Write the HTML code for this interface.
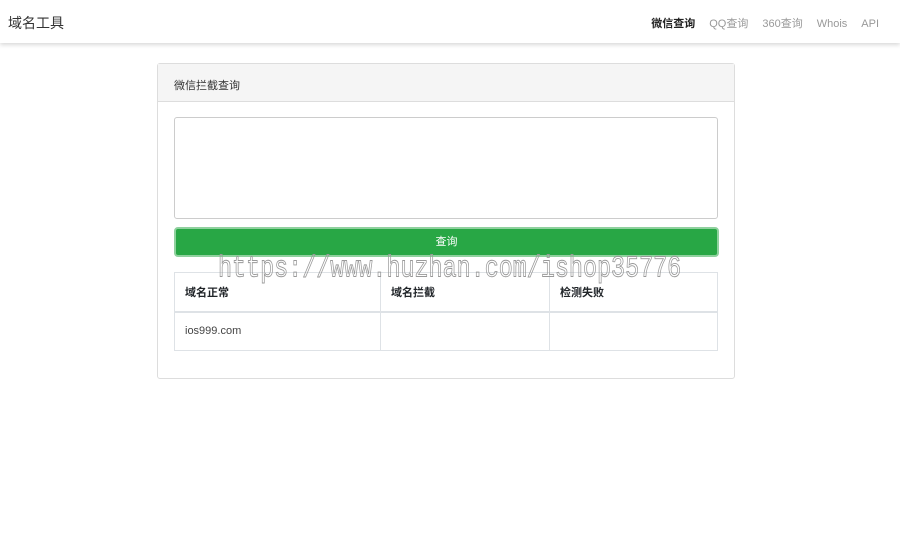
<!DOCTYPE html>
<html><head><meta charset="utf-8"><style>
*{box-sizing:border-box;margin:0;padding:0}
body{width:900px;height:539px;background:#fff;font-family:"Liberation Sans","Noto Sans CJK SC",sans-serif;position:relative;overflow:hidden;color:#212529}
.nav{position:absolute;left:0;top:0;width:900px;height:43px;background:#fff;box-shadow:0 2px 4px rgba(0,0,0,.15)}
.brand{position:absolute;left:8px;top:13px;font-size:14px;color:#333}
.links{position:absolute;right:21px;top:15px;font-size:11px;color:#999}
.links span{margin-left:14px}
.links .a{color:#222;font-weight:bold}
.card{position:absolute;left:157px;top:63px;width:578px;height:316px;border:1px solid #ddd;border-radius:3px}
.ch{height:38px;background:#f5f5f5;border-bottom:1px solid #ddd;font-size:11px;padding:13px 0 0 16px;color:#333}
.ta{position:absolute;left:16px;top:53px;width:544px;height:102px;border:1px solid #ccc;border-radius:3px}
.btn{position:absolute;left:16px;top:163px;width:545px;height:30px;background:#28a745;border:2px solid #8fd19e;border-radius:4px;color:#fff;font-size:11px;text-align:center;line-height:26px}
table{position:absolute;left:16px;top:208px;width:544px;border-collapse:collapse;font-size:11px}
td{border:1px solid #dee2e6;height:39px;padding-left:10px}
th{border:1px solid #dee2e6;border-bottom:2px solid #dee2e6;height:39px;text-align:left;padding-left:10px;font-weight:bold}
.wm{position:absolute;left:218px;top:253px;font-family:"Liberation Mono",monospace;font-size:23.4px;color:transparent;-webkit-text-stroke:0.7px #999;transform:scaleY(1.3);transform-origin:0 0}
</style></head><body>
<div class="nav"><div class="brand">域名工具</div>
<div class="links"><span class="a">微信查询</span><span>QQ查询</span><span>360查询</span><span>Whois</span><span>API</span></div></div>
<div class="card"><div class="ch">微信拦截查询</div>
<div class="ta"></div>
<div class="btn">查询</div>
<table><tr><th style="width:206px">域名正常</th><th style="width:169px">域名拦截</th><th>检测失败</th></tr>
<tr><td style="color:#444">ios999.com</td><td></td><td></td></tr></table>
</div>
<div class="wm">https://www.huzhan.com/ishop35776</div>
</body></html>
